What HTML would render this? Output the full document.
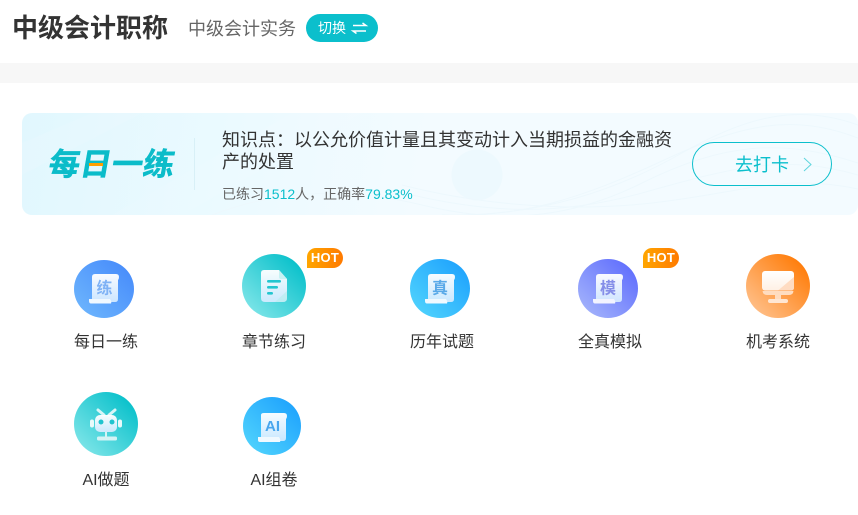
<!DOCTYPE html>
<html lang="zh">
<head>
<meta charset="utf-8">
<title>中级会计职称</title>
<style>
html,body{margin:0;padding:0;background:#fff;}
body{width:858px;height:515px;overflow:hidden;position:relative;font-family:"Liberation Sans","Noto Sans CJK SC",sans-serif;color:#333;}
.a{position:absolute;white-space:nowrap;}
.lbl{position:absolute;width:120px;text-align:center;font-size:16px;line-height:22px;color:#333;}
.ic{position:absolute;border-radius:50%;filter:blur(.3px);}
.hot{position:absolute;width:36px;height:20px;border-radius:9px 10px 10px 0;background:linear-gradient(90deg,#ffa600,#ff7a00);color:#fff;font-size:13px;font-weight:bold;line-height:20px;text-align:center;letter-spacing:.3px;}
svg{position:absolute;left:0;top:0;overflow:visible;}
svg.i{filter:blur(.35px);}
</style>
</head>
<body>
<div class="a" style="left:12px;top:10px;font-size:26px;font-weight:bold;line-height:36px;color:#333;">中级会计职称</div>
<div class="a" style="left:188px;top:16px;font-size:18px;line-height:26px;color:#666;">中级会计实务</div>
<div class="a" style="left:306px;top:14px;width:72px;height:28px;border-radius:14px;background:#0bbfcc;color:#fff;">
  <span class="a" style="left:12px;top:5px;font-size:14px;line-height:18px;">切换</span>
  <svg width="72" height="28"><path d="M47 11.500H60L56.500 9M60 17H47L50.500 19.500" fill="none" stroke="#fff" stroke-width="1.500"/></svg>
</div>
<div class="a" style="left:0;top:63px;width:858px;height:20px;background:#f7f7f7;"></div>

<div class="a" style="left:22px;top:113px;width:836px;height:102px;border-radius:10px;overflow:hidden;background:linear-gradient(100deg,#e1f7fe 0%,#ebfaff 25%,#f3fbff 48%,#f3fbff 100%);">
  <svg width="836" height="102">
    <path d="M0 30L70 0H120L0 62Z" fill="#fff" opacity=".1"/>
    <path d="M90 102L270 0H340L160 102Z" fill="#fff" opacity=".08"/>
    <circle cx="455" cy="62" r="25.500" fill="#edf9fe"/>
    <g fill="none" stroke="#edf8fd" stroke-width="1">
      <path d="M190 102C260 75 330 75 400 92S540 110 620 70 760 25 836 50"/>
      <path d="M420 102C500 105 560 85 640 48S770 0 836 25"/>
      <path d="M440 102C520 100 590 80 660 40S780 -8 836 12"/>
      <path d="M390 82C460 98 530 105 620 80S760 40 836 62"/>
      <path d="M380 72C450 90 540 100 630 90S760 60 836 76"/>
    </g>
  </svg>
  <div class="a" style="left:172px;top:25px;width:1px;height:52px;background:#d8f0f7;"></div>
  <div class="a" style="left:27px;top:30px;font-size:31px;line-height:44px;font-weight:bold;letter-spacing:.5px;color:#0bbcc9;transform:skewX(-10deg);-webkit-text-stroke:.6px #0bbcc9;">每日一练</div>
  <div class="a" style="left:67px;top:50px;width:14px;height:3px;background:#ffa000;"></div>
  <div class="a" style="left:200px;top:16px;font-size:18px;line-height:22px;color:#333;">知识点&#xFF1A;以公允价值计量且其变动计入当期损益的金融资<br>产的处置</div>
  <div class="a" style="left:200px;top:71px;font-size:14px;line-height:20px;color:#666;">已练习<span style="color:#0bbfcc">1512</span>人&#xFF0C;正确率<span style="color:#0bbfcc">79.83%</span></div>
  <div class="a" style="left:670px;top:29px;width:138px;height:42px;border:1px solid #0bbfcc;border-radius:22px;">
    <span class="a" style="left:42px;top:10px;font-size:18px;line-height:24px;color:#0bbfcc;">去打卡</span>
    <svg width="138" height="42"><path d="M111 15L118 21.500L111 28" fill="none" stroke="#5fd5dd" stroke-width="1"/></svg>
  </div>
</div>

<!-- 每日一练 -->
<div class="ic" style="left:74px;top:260px;width:60px;height:58px;background:linear-gradient(225deg,#4a8ffb 15%,#6cb4fd 90%);"></div>
<svg class="i" width="858" height="515">
  <defs>
    <linearGradient id="pg" x1="0" y1="0" x2="0" y2="1"><stop offset="0" stop-color="#fff" stop-opacity=".96"/><stop offset="1" stop-color="#d6ebff" stop-opacity=".92"/></linearGradient>
  </defs>
  <path d="M92 277Q92 274 95 274H116Q119 274 119 277Q119 279 118 280V299Q118 302 115 302H92Z" fill="url(#pg)"/>
  <path d="M89 299H110Q112 302 111 303.500H91Q89 303.500 89 301Z" fill="#f0f8ff"/>
  <text x="104.500" y="293.500" text-anchor="middle" font-size="16" font-weight="bold" fill="#7fb2f5" font-family="Liberation Sans,Noto Sans CJK SC,sans-serif">练</text>
</svg>
<div class="lbl" style="left:46px;top:332px;">每日一练</div>

<!-- 章节练习 -->
<div class="ic" style="left:242px;top:254px;width:64px;height:64px;background:linear-gradient(225deg,#0dc2cc 15%,#7ee5e8 90%);"></div>
<svg class="i" width="858" height="515">
  <path d="M264 270H279L287 279V298Q287 302 283 302H265Q261 302 261 298V273Q261 270 264 270Z" fill="url(#pg)"/>
  <path d="M279 270L287 279H281Q279 279 279 277Z" fill="#c8f2f3"/>
  <path d="M275 302L287 291V298Q287 302 283 302Z" fill="#b4ecec" opacity=".6"/>
  <rect x="267" y="280" width="14" height="2.600" rx="1.300" fill="#22c6d0"/>
  <rect x="267" y="286" width="11" height="2.600" rx="1.300" fill="#22c6d0"/>
  <rect x="267" y="292" width="6" height="2.600" rx="1.300" fill="#22c6d0"/>
</svg>
<div class="hot" style="left:307px;top:248px;">HOT</div>
<div class="lbl" style="left:214px;top:332px;">章节练习</div>

<!-- 历年试题 -->
<div class="ic" style="left:410px;top:259px;width:60px;height:59px;background:linear-gradient(225deg,#22a6fd 15%,#4fd2fd 90%);"></div>
<svg class="i" width="858" height="515">
  <path d="M428 277Q428 274 431 274H452Q455 274 455 277Q455 279 454 280V299Q454 302 451 302H428Z" fill="url(#pg)"/>
  <path d="M425 299H446Q448 302 447 303.500H427Q425 303.500 425 301Z" fill="#f0f9ff"/>
  <text x="440" y="293.500" text-anchor="middle" font-size="16" font-weight="bold" fill="#59a9e8" font-family="Liberation Sans,Noto Sans CJK SC,sans-serif">真</text>
</svg>
<div class="lbl" style="left:382px;top:332px;">历年试题</div>

<!-- 全真模拟 -->
<div class="ic" style="left:578px;top:259px;width:60px;height:59px;background:linear-gradient(225deg,#6472fd 15%,#a2b2fb 90%);"></div>
<svg class="i" width="858" height="515">
  <path d="M596 277Q596 274 599 274H620Q623 274 623 277Q623 279 622 280V299Q622 302 619 302H596Z" fill="url(#pg)"/>
  <path d="M593 299H614Q616 302 615 303.500H595Q593 303.500 593 301Z" fill="#f2f3ff"/>
  <text x="608" y="293.500" text-anchor="middle" font-size="16" font-weight="bold" fill="#858ee8" font-family="Liberation Sans,Noto Sans CJK SC,sans-serif">模</text>
</svg>
<div class="hot" style="left:643px;top:248px;">HOT</div>
<div class="lbl" style="left:550px;top:332px;">全真模拟</div>

<!-- 机考系统 -->
<div class="ic" style="left:746px;top:254px;width:64px;height:64px;background:linear-gradient(225deg,#ff7f0e 15%,#ffc08a 90%);"></div>
<svg class="i" width="858" height="515">
  <defs><linearGradient id="mg" x1="0" y1="0" x2="0" y2="1"><stop offset="0" stop-color="#fff"/><stop offset="1" stop-color="#fff0e4"/></linearGradient></defs>
  <rect x="762" y="271" width="32" height="19.500" rx="3" fill="url(#mg)"/>
  <path d="M794 277V287.500Q794 290.500 791 290.500H778Z" fill="#ffdcc2"/>
  <path d="M762.500 291H793.500Q793 295 789 295H767Q763 295 762.500 291Z" fill="#ffdcbf"/>
  <rect x="775" y="295" width="6" height="5" fill="#ffdcbf"/>
  <rect x="768" y="299" width="20" height="4" rx="2" fill="#ffe6d2"/>
</svg>
<div class="lbl" style="left:718px;top:332px;">机考系统</div>

<!-- AI做题 -->
<div class="ic" style="left:74px;top:392px;width:64px;height:64px;background:linear-gradient(225deg,#0dc2cc 15%,#7ee5e8 90%);"></div>
<svg class="i" width="858" height="515">
  <path d="M98 410L104 415M115 410L109 415" stroke="#d8f6f7" stroke-width="3" stroke-linecap="round"/>
  <rect x="95" y="415" width="22" height="17" rx="5" fill="url(#pg)"/>
  <rect x="90" y="419.500" width="4" height="8" rx="2" fill="#e8fafa"/>
  <rect x="118" y="419.500" width="4" height="8" rx="2" fill="#e8fafa"/>
  <circle cx="101" cy="422" r="2.500" fill="#20c4cf"/>
  <circle cx="112" cy="422" r="2.500" fill="#20c4cf"/>
  <rect x="105" y="432" width="2" height="5" fill="#d4f3f5"/>
  <rect x="97" y="436.500" width="20" height="4" rx="1.500" fill="#d4f3f5"/>
</svg>
<div class="lbl" style="left:46px;top:470px;">AI做题</div>

<!-- AI组卷 -->
<div class="ic" style="left:243px;top:397px;width:58px;height:58px;background:linear-gradient(225deg,#22a6fd 15%,#4fd2fd 90%);"></div>
<svg class="i" width="858" height="515">
  <path d="M261 415Q261 413 264 413H284Q287 413 287 416Q287 418 286 419V438Q286 441 283 441H261Z" fill="url(#pg)"/>
  <path d="M258 437H279Q281 440 280 442H260Q258 442 258 440Z" fill="#f0f9ff"/>
  <text x="272.500" y="431" text-anchor="middle" font-size="15" font-weight="bold" fill="#49a6ee" font-family="Liberation Sans,sans-serif">AI</text>
</svg>
<div class="lbl" style="left:214px;top:470px;">AI组卷</div>
</body>
</html>
